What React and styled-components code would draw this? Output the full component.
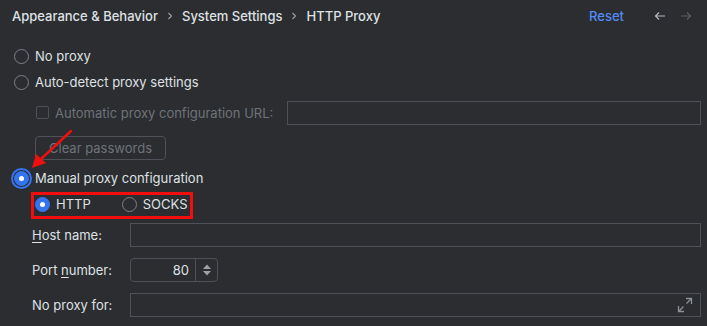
import React from "react";
import styled, { createGlobalStyle } from "styled-components";

const Global = createGlobalStyle`
  html, body { margin: 0; padding: 0; background: #2B2D30; }
  body { font-family: Inter, "Noto Sans", sans-serif; }
`;

const Page = styled.div`
  position: relative;
  width: 707px;
  height: 326px;
  overflow: hidden;
  background: #2B2D30;
  color: #DFE1E5;
  font-size: 13px;
  font-family: Inter, "Noto Sans", sans-serif;
  box-sizing: border-box;
`;

const Header = styled.div`
  display: flex;
  align-items: center;
  height: 31px;
  padding: 0 15px 0 12px;
`;

const Crumbs = styled.div`
  display: flex;
  align-items: center;
  flex: 1;
`;

const Crumb = styled.span`
  color: #DFE1E5;
  font-weight: 500;
`;

const Chevron = styled.span`
  display: inline-flex;
  width: 24px;
  justify-content: center;
`;

const ResetLink = styled.span`
  color: #548AF7;
  font-weight: 500;
  margin-right: 30px;
`;

const NavIcons = styled.div`
  display: flex;
  gap: 14px;
  align-items: center;
`;

const Content = styled.div`
  display: flex;
  flex-direction: column;
  padding: 12px 6px 0 14px;
`;

const OptionRow = styled.div`
  display: flex;
  align-items: center;
  height: 26px;
  gap: 6px;
  margin-top: ${(p) => p.$mt || 0}px;
  padding-left: ${(p) => p.$indent || 0}px;
`;

const OptionGroup = styled.span`
  display: flex;
  align-items: center;
  gap: 6px;
  margin-left: ${(p) => p.$ml || 0}px;
`;

const RadioCircle = styled.span`
  position: relative;
  box-sizing: border-box;
  width: 15px;
  height: 15px;
  border-radius: 50%;
  flex: none;
  border: 1px solid ${(p) => (p.$checked ? "#3574F0" : "#7D8087")};
  background: ${(p) => (p.$checked ? "#3574F0" : "transparent")};
  box-shadow: ${(p) => (p.$focus ? "0 0 0 1px #2B2D30, 0 0 0 3px #3574F0" : "none")};
  &::after {
    content: "";
    display: ${(p) => (p.$checked ? "block" : "none")};
    position: absolute;
    left: 50%;
    top: 50%;
    width: 5px;
    height: 5px;
    margin: -2.5px 0 0 -2.5px;
    border-radius: 50%;
    background: #FFFFFF;
  }
`;

const Label = styled.span`
  color: ${(p) => (p.$disabled ? "#6F737A" : "#DFE1E5")};
  white-space: nowrap;
`;

const Checkbox = styled.span`
  box-sizing: border-box;
  width: 13px;
  height: 13px;
  border: 1px solid #4E5157;
  border-radius: 2px;
  flex: none;
`;

const TextField = styled.div`
  box-sizing: border-box;
  height: 24px;
  border: 1px solid #4E5157;
  flex: 1;
  display: flex;
  align-items: center;
  justify-content: flex-end;
  padding-right: 7px;
`;

const UrlRow = styled.div`
  display: flex;
  align-items: center;
  height: 25px;
  margin-top: 5px;
  padding-left: 22px;
  gap: 6px;
`;

const UrlField = styled(TextField)`
  margin-left: 8px;
`;

const DisabledButton = styled.div`
  box-sizing: border-box;
  margin: 11px 0 0 21px;
  width: 131px;
  height: 24px;
  border: 1px solid #4E5157;
  border-radius: 4px;
  color: #6F737A;
  display: flex;
  align-items: center;
  justify-content: center;
`;

const Form = styled.div`
  display: grid;
  grid-template-columns: 98px 1fr;
  row-gap: 11px;
  align-items: center;
  margin: 6px 0 0 18px;
`;

const Under = styled.span`
  text-decoration: underline;
  text-underline-offset: 2px;
`;

const Spinner = styled.div`
  box-sizing: border-box;
  width: 88px;
  height: 24px;
  border: 1px solid #4E5157;
  border-radius: 4px;
  display: flex;
`;

const SpinValue = styled.div`
  flex: 1;
  display: flex;
  align-items: center;
  justify-content: flex-end;
  padding-right: 6px;
  border-right: 1px solid #4E5157;
  color: #DFE1E5;
`;

const SpinArrows = styled.div`
  width: 21px;
  display: flex;
  align-items: center;
  justify-content: center;
`;

const Annotation = styled.svg`
  position: absolute;
  left: 0;
  top: 0;
  pointer-events: none;
`;

const HighlightBox = styled.div`
  position: absolute;
  left: 31px;
  top: 192px;
  width: 162px;
  height: 27px;
  box-sizing: border-box;
  border: 3px solid #F20E0E;
  pointer-events: none;
`;

const ChevronIcon = () => (
  <svg width="8" height="10" viewBox="0 0 8 10" fill="none" stroke="#9DA0A8" strokeWidth="1.1">
    <path d="M2.5 2l3 3-3 3" />
  </svg>
);

const ExpandIcon = () => (
  <svg width="16" height="16" viewBox="0 0 16 16" fill="none" stroke="#8C8F95" strokeWidth="1.3">
    <path d="M9 1.5h5.5V7M14.5 1.5L9.5 6.5" />
    <path d="M7 14.5H1.5V9M1.5 14.5l5-5" />
  </svg>
);

export default function App() {
  return (
    <Page>
      <Global />
      <Header>
        <Crumbs>
          <Crumb>Appearance &amp; Behavior</Crumb>
          <Chevron>
            <ChevronIcon />
          </Chevron>
          <Crumb>System Settings</Crumb>
          <Chevron>
            <ChevronIcon />
          </Chevron>
          <Crumb>HTTP Proxy</Crumb>
        </Crumbs>
        <ResetLink>Reset</ResetLink>
        <NavIcons>
          <svg width="12" height="12" viewBox="0 0 12 12" fill="none" stroke="#B4B8BF" strokeWidth="1.2">
            <path d="M11 6H1.5M5 2.5L1.5 6 5 9.5" />
          </svg>
          <svg width="12" height="12" viewBox="0 0 12 12" fill="none" stroke="#5A5D63" strokeWidth="1.2">
            <path d="M1 6h9.5M7 2.5L10.5 6 7 9.5" />
          </svg>
        </NavIcons>
      </Header>
      <Content>
        <OptionRow>
          <RadioCircle />
          <Label>No proxy</Label>
        </OptionRow>
        <OptionRow>
          <RadioCircle />
          <Label>Auto-detect proxy settings</Label>
        </OptionRow>
        <UrlRow>
          <Checkbox />
          <Label $disabled>Automatic proxy configuration URL:</Label>
          <UrlField />
        </UrlRow>
        <DisabledButton>Clear passwords</DisabledButton>
        <OptionRow $mt={5}>
          <RadioCircle $checked $focus />
          <Label>Manual proxy configuration</Label>
        </OptionRow>
        <OptionRow $indent={21}>
          <RadioCircle $checked />
          <Label>HTTP</Label>
          <OptionGroup $ml={25}>
            <RadioCircle />
            <Label>SOCKS</Label>
          </OptionGroup>
        </OptionRow>
        <Form>
          <Label>
            <Under>H</Under>ost name:
          </Label>
          <TextField />
          <Label>
            Port <Under>n</Under>umber:
          </Label>
          <Spinner>
            <SpinValue>80</SpinValue>
            <SpinArrows>
              <svg width="10" height="14" viewBox="0 0 10 14" fill="#9DA0A8">
                <path d="M5 1.5L9 6H1z" />
                <path d="M1 8h8l-4 4.5z" />
              </svg>
            </SpinArrows>
          </Spinner>
          <Label>No proxy for:</Label>
          <TextField>
            <ExpandIcon />
          </TextField>
        </Form>
      </Content>
      <HighlightBox />
      <Annotation width="707" height="326" viewBox="0 0 707 326">
        <line x1="71" y1="131" x2="41" y2="159" stroke="#F20E0E" strokeWidth="2.4" strokeLinecap="round" />
        <path d="M32 168 L36 154 L46 163 Z" fill="#F20E0E" />
      </Annotation>
    </Page>
  );
}
